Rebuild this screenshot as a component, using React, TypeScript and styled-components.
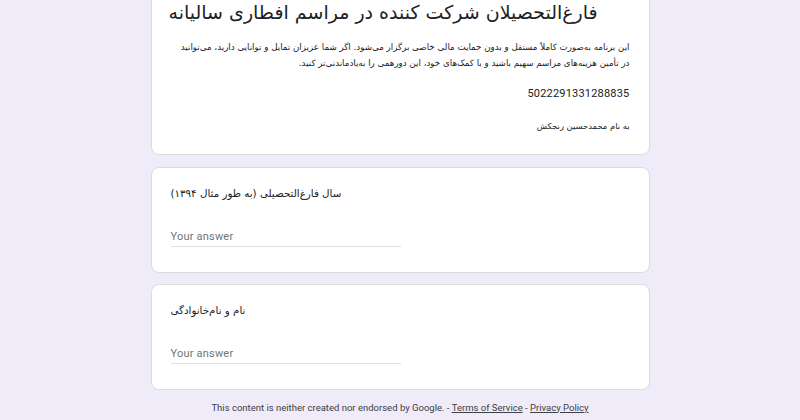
import styled, { createGlobalStyle } from "styled-components";

const GlobalStyle = createGlobalStyle`
  html, body {
    margin: 0;
    padding: 0;
    background: #f0ebf8;
    overflow: hidden;
  }
  body {
    font-family: Roboto, "DejaVu Sans", sans-serif;
    color: #202124;
  }
`;

const Page = styled.div`
  width: 499px;
  margin: 0 auto;
  display: flex;
  flex-direction: column;
  gap: 11.5px;
`;

const Card = styled.div<{ $first?: boolean }>`
  background: #fff;
  border: 1px solid #dadce0;
  border-radius: 8px;
  box-sizing: border-box;
  padding: ${(p) => (p.$first ? "8px 19px 20px 19px" : "17px 19px 25px 19px")};
  margin-top: ${(p) => (p.$first ? "-13px" : "0")};
  display: flex;
  flex-direction: column;
`;

const Title = styled.h1`
  margin: 0 0 0 -2px;
  font-family: "DejaVu Sans", sans-serif;
  font-weight: normal;
  font-size: 19px;
  line-height: 32px;
  white-space: nowrap;
  text-align: left;
  color: #202124;
`;

const Description = styled.p`
  margin: 11px 0 0;
  font-family: "DejaVu Sans", sans-serif;
  font-size: 8.7px;
  line-height: 16px;
  white-space: nowrap;
  text-align: right;
  color: #202124;
`;

const Number = styled.div`
  margin-top: 15px;
  font-family: Roboto, sans-serif;
  font-size: 11px;
  line-height: 16px;
  letter-spacing: 0.2px;
  text-align: right;
`;

const Signature = styled.div`
  margin-top: 16px;
  font-family: "DejaVu Sans", sans-serif;
  font-size: 8.4px;
  line-height: 16px;
  text-align: right;
`;

const Question = styled.div`
  font-family: "DejaVu Sans", sans-serif;
  font-size: 10.3px;
  line-height: 16px;
  text-align: left;
`;

const Answer = styled.div`
  margin-top: 24px;
  width: 230px;
  height: 22px;
  padding-top: 3px;
  box-sizing: border-box;
  border-bottom: 1px solid #e0e0e0;
  font-family: Roboto, sans-serif;
  font-size: 11px;
  line-height: 18px;
  letter-spacing: 0.2px;
  color: #70757a;
`;

const Footer = styled.div`
  margin-top: -1px;
  font-family: Roboto, sans-serif;
  font-size: 9.5px;
  line-height: 14px;
  color: #3c4043;
  text-align: center;
`;

const FooterLink = styled.a`
  color: #3c4043;
  text-decoration: underline;
`;

export default function App() {
  return (
    <>
      <GlobalStyle />
      <Page>
        <Card $first>
          <Title dir="rtl">فارغ‌التحصیلان شرکت کننده در مراسم افطاری سالیانه</Title>
          <Description dir="rtl">
            این برنامه به‌صورت کاملاً مستقل و بدون حمایت مالی خاصی برگزار می‌شود. اگر شما عزیزان تمایل و توانایی دارید، می‌توانید
            <br />
            در تأمین هزینه‌های مراسم سهیم باشید و با کمک‌های خود، این دورهمی را به‌یادماندنی‌تر کنید.
          </Description>
          <Number>5022291331288835</Number>
          <Signature dir="rtl">به نام محمدحسین رنجکش</Signature>
        </Card>
        <Card>
          <Question dir="rtl">سال فارغ‌التحصیلی (به طور مثال ۱۳۹۴)</Question>
          <Answer>Your answer</Answer>
        </Card>
        <Card>
          <Question dir="rtl">نام و نام‌خانوادگی</Question>
          <Answer>Your answer</Answer>
        </Card>
        <Footer>
          This content is neither created nor endorsed by Google. -{" "}
          <FooterLink>Terms of Service</FooterLink> - <FooterLink>Privacy Policy</FooterLink>
        </Footer>
      </Page>
    </>
  );
}
